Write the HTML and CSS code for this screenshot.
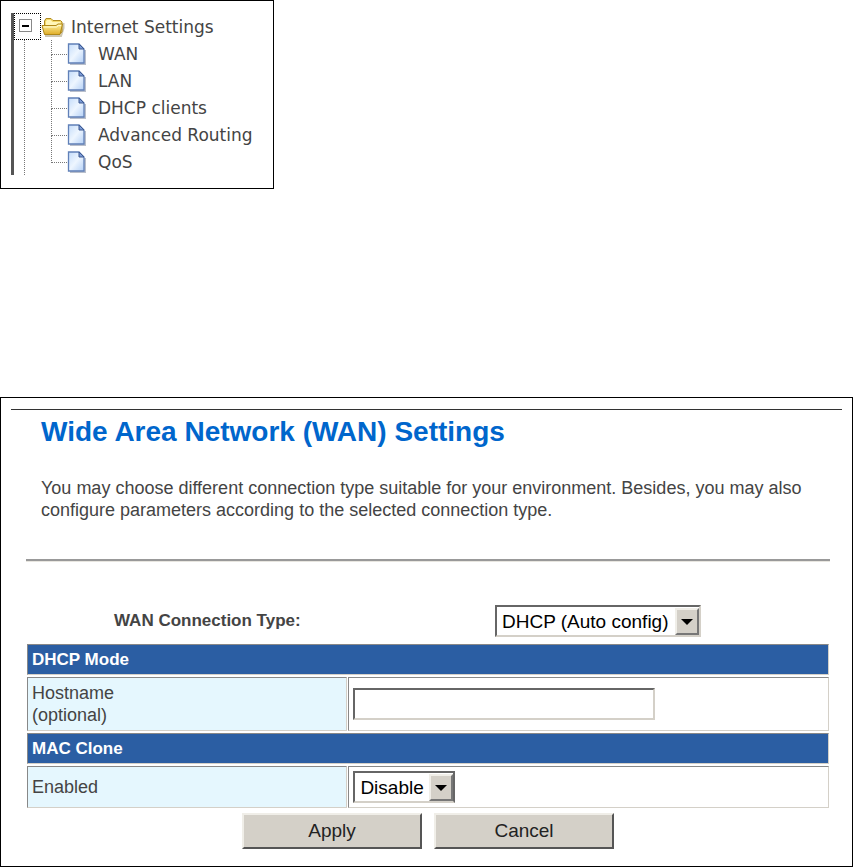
FILE: index.html
```html
<!DOCTYPE html>
<html lang="en">
<head>
    <meta charset="UTF-8">
    <meta name="viewport" content="width=device-width, initial-scale=1.0">
    <title>Wide Area Network (WAN) Settings</title>
    <link rel="stylesheet" href="styles.css">
</head>
<body>
    <svg width="0" height="0" class="defs" aria-hidden="true">
        <defs>
            <linearGradient id="pageFill" x1="0" y1="0" x2="1" y2="1">
                <stop offset="0" stop-color="#c4dcfa"/>
                <stop offset="0.5" stop-color="#eef6ff"/>
                <stop offset="1" stop-color="#b4d0f6"/>
            </linearGradient>
            <linearGradient id="folderFill" x1="0" y1="0" x2="0" y2="1">
                <stop offset="0" stop-color="#fff3a0"/>
                <stop offset="1" stop-color="#e0ad28"/>
            </linearGradient>
            <symbol id="page" viewBox="0 0 20 24">
                <path d="M3 22H18V8" fill="none" stroke="#8a94a8" stroke-width="2" opacity="0.600"/>
                <path d="M1.500 2H12L17 7V21H1.500Z" fill="url(#pageFill)" stroke="#6080b8" stroke-width="1.300"/>
                <path d="M12 2V7H17Z" fill="#7c9cd8" stroke="#3c5890" stroke-width="1"/>
            </symbol>
            <symbol id="folder" viewBox="0 0 24 22">
                <path d="M4 20H20L22.500 12V7" fill="none" stroke="#807040" stroke-width="2" opacity="0.400"/>
                <path d="M3.500 17V5L5 2.500H10L12 4.500H19.500L21 6V16L18 18.500H5Z" fill="#f4d868" stroke="#b08a20"/>
                <path d="M5 5.500L6 4H9.500L11.500 6H19.500V9H5Z" fill="#fff6b8"/>
                <path d="M1 9.500H15L17 8H21.500L19 18.500H3.500Z" fill="url(#folderFill)" stroke="#b08818"/>
                <path d="M2.500 11H15.500L17.500 9.500H20" fill="none" stroke="#fffbd0"/>
            </symbol>
        </defs>
    </svg>

    <nav class="menu">
        <div class="tree">
            <div class="root">
                <button type="button" class="toggle" aria-label="Collapse Internet Settings"><span class="minus"></span></button>
                <svg class="folder" aria-hidden="true"><use href="#folder"/></svg>
                <a href="#">Internet Settings</a>
            </div>
            <div class="branch">
                <ul>
                    <li><span class="elbow"></span><svg class="page" aria-hidden="true"><use href="#page"/></svg><a href="#">WAN</a></li>
                    <li><span class="elbow"></span><svg class="page" aria-hidden="true"><use href="#page"/></svg><a href="#">LAN</a></li>
                    <li><span class="elbow"></span><svg class="page" aria-hidden="true"><use href="#page"/></svg><a href="#">DHCP clients</a></li>
                    <li><span class="elbow"></span><svg class="page" aria-hidden="true"><use href="#page"/></svg><a href="#">Advanced Routing</a></li>
                    <li><span class="elbow"></span><svg class="page" aria-hidden="true"><use href="#page"/></svg><a href="#">QoS</a></li>
                </ul>
            </div>
        </div>
    </nav>

    <main class="panel">
        <div class="intro">
            <h1>Wide Area Network (WAN) Settings</h1>
            <p>You may choose different connection type suitable for your environment. Besides, you may also configure parameters according to the selected connection type.</p>
        </div>

        <form class="settings">
            <hr>
            <div class="connection">
                <label for="wanType">WAN Connection Type:</label>
                <div>
                    <span class="dropdown">
                        <select id="wanType" name="wanType" class="wide">
                            <option>DHCP (Auto config)</option>
                        </select>
                        <span class="arrow"></span>
                    </span>
                </div>
            </div>

            <table>
                <colgroup>
                    <col class="names">
                    <col>
                </colgroup>
                <tr>
                    <th colspan="2">DHCP Mode</th>
                </tr>
                <tr class="tall">
                    <td class="name"><label for="hostname">Hostname<br>(optional)</label></td>
                    <td><input type="text" id="hostname" name="hostname"></td>
                </tr>
                <tr>
                    <th colspan="2">MAC Clone</th>
                </tr>
                <tr class="short">
                    <td class="name"><label for="macClone">Enabled</label></td>
                    <td>
                        <span class="dropdown">
                            <select id="macClone" name="macClone" class="narrow">
                                <option>Disable</option>
                            </select>
                            <span class="arrow"></span>
                        </span>
                    </td>
                </tr>
            </table>

            <div class="buttons">
                <button type="button" class="btn">Apply</button>
                <button type="button" class="btn">Cancel</button>
            </div>
        </form>
    </main>
</body>
</html>
```
FILE: styles.css
```css
* {
    box-sizing: border-box;
}

body {
    margin: 0;
    background-color: white;
    font-family: "Liberation Sans", Arial, sans-serif;
    font-size: 18px;
    line-height: 22px;
    color: #444;
}

.defs {
    position: absolute;
}

/* menu tree */
.menu {
    width: 274px;
    border: 1px solid black;
    padding: 12px 10px 13px;
    font-family: "DejaVu Sans", Verdana, sans-serif;
    font-size: 17px;
}

.tree {
    border-left: 3px solid #555;
}

.tree a {
    color: #444;
    text-decoration: none;
    white-space: nowrap;
}

.root {
    display: flex;
    align-items: center;
    height: 27px;
}

.toggle {
    display: flex;
    align-items: center;
    justify-content: center;
    width: 27px;
    height: 27px;
    padding: 0 5px 2px 0;
    border: 1px dotted black;
    background: none;
}

.minus {
    display: flex;
    align-items: center;
    justify-content: center;
    width: 13px;
    height: 13px;
    border: 1px solid #888;
}

.minus::before {
    content: "";
    width: 7px;
    height: 2px;
    background-color: black;
}

.folder {
    width: 24px;
    height: 22px;
    margin-right: 6px;
}

.branch {
    margin-left: 10px;
    border-left: 1px dotted #777;
}

.branch ul {
    margin: 0;
    padding: 0 0 0 26px;
    list-style: none;
}

.branch li {
    display: flex;
    align-items: center;
    height: 27px;
}

.elbow {
    width: 16px;
    height: 27px;
}

.elbow::before,
.elbow::after {
    content: "";
    display: block;
    height: 14px;
    border-left: 1px dotted #777;
}

.elbow::before {
    border-bottom: 1px dotted #777;
}

.elbow::after {
    height: 13px;
}

li:last-child .elbow::after {
    display: none;
}

.page {
    width: 20px;
    height: 24px;
    margin-right: 11px;
}

/* settings panel */
.panel {
    margin-top: 208px;
    border: 1px solid black;
    padding: 11px 10px 17px;
}

.intro {
    border-top: 1px solid #333;
    padding: 5px 30px 0;
}

h1 {
    margin: 0 0 28px;
    font-size: 28px;
    line-height: 34px;
    color: #06c;
}

p {
    margin: 0;
}

.settings {
    margin: 38px 12px 0 15px;
}

hr {
    margin: 0 0 43px;
    border: 0;
    border-top: 2px solid #999;
    border-bottom: 1px solid #e8e6e0;
}

.connection {
    display: grid;
    grid-template-columns: 381fr 335fr;
    align-items: center;
    padding-left: 88px;
    font-size: 17px;
    font-weight: bold;
}

.dropdown {
    display: inline-block;
    position: relative;
    vertical-align: top;
}

select,
input[type=text] {
    display: block;
    height: 32px;
    border: 2px solid;
    border-color: #666 #d4d0c8 #d4d0c8 #666;
    border-radius: 0;
    outline: none;
    background-color: white;
    font-family: "Liberation Sans", Arial, sans-serif;
    font-size: 19px;
    color: black;
}

select {
    appearance: none;
    padding: 0 26px 0 5px;
}

.wide {
    width: 206px;
}

.narrow {
    width: 102px;
    border-right-color: #666;
}

input[type=text] {
    width: 302px;
    max-width: 100%;
}

.arrow {
    display: flex;
    align-items: center;
    justify-content: center;
    position: absolute;
    top: 3px;
    right: 2px;
    width: 24px;
    height: 27px;
    border: 2px solid;
    border-color: #f0eee8 #777 #777 #f0eee8;
    background-color: #d4d0c8;
    pointer-events: none;
}

.arrow::before {
    content: "";
    border: 6px solid transparent;
    border-top-color: black;
    border-bottom: 0;
}

table {
    width: 100%;
    margin-top: 5px;
    border-collapse: separate;
    border-spacing: 1px 2px;
    table-layout: fixed;
}

.names {
    width: 40%;
}

th,
td {
    border: 1px solid;
    border-color: #888 #d4d0c8 #d4d0c8 #888;
    padding: 0 4px;
    text-align: left;
}

th {
    height: 31px;
    background-color: #2b5ea3;
    font-size: 17px;
    color: white;
}

.name {
    background-color: #e5f7fe;
}

.tall td {
    height: 54px;
}

.short td {
    height: 42px;
}

.buttons {
    display: flex;
    justify-content: center;
    gap: 12px;
    margin-top: 3px;
}

.btn {
    width: 180px;
    height: 36px;
    padding: 0;
    border: 2px solid;
    border-color: #f0eee8 #555 #555 #f0eee8;
    background-color: #d4d0c8;
    font-family: "Liberation Sans", Arial, sans-serif;
    font-size: 19px;
    color: #222;
}
```
